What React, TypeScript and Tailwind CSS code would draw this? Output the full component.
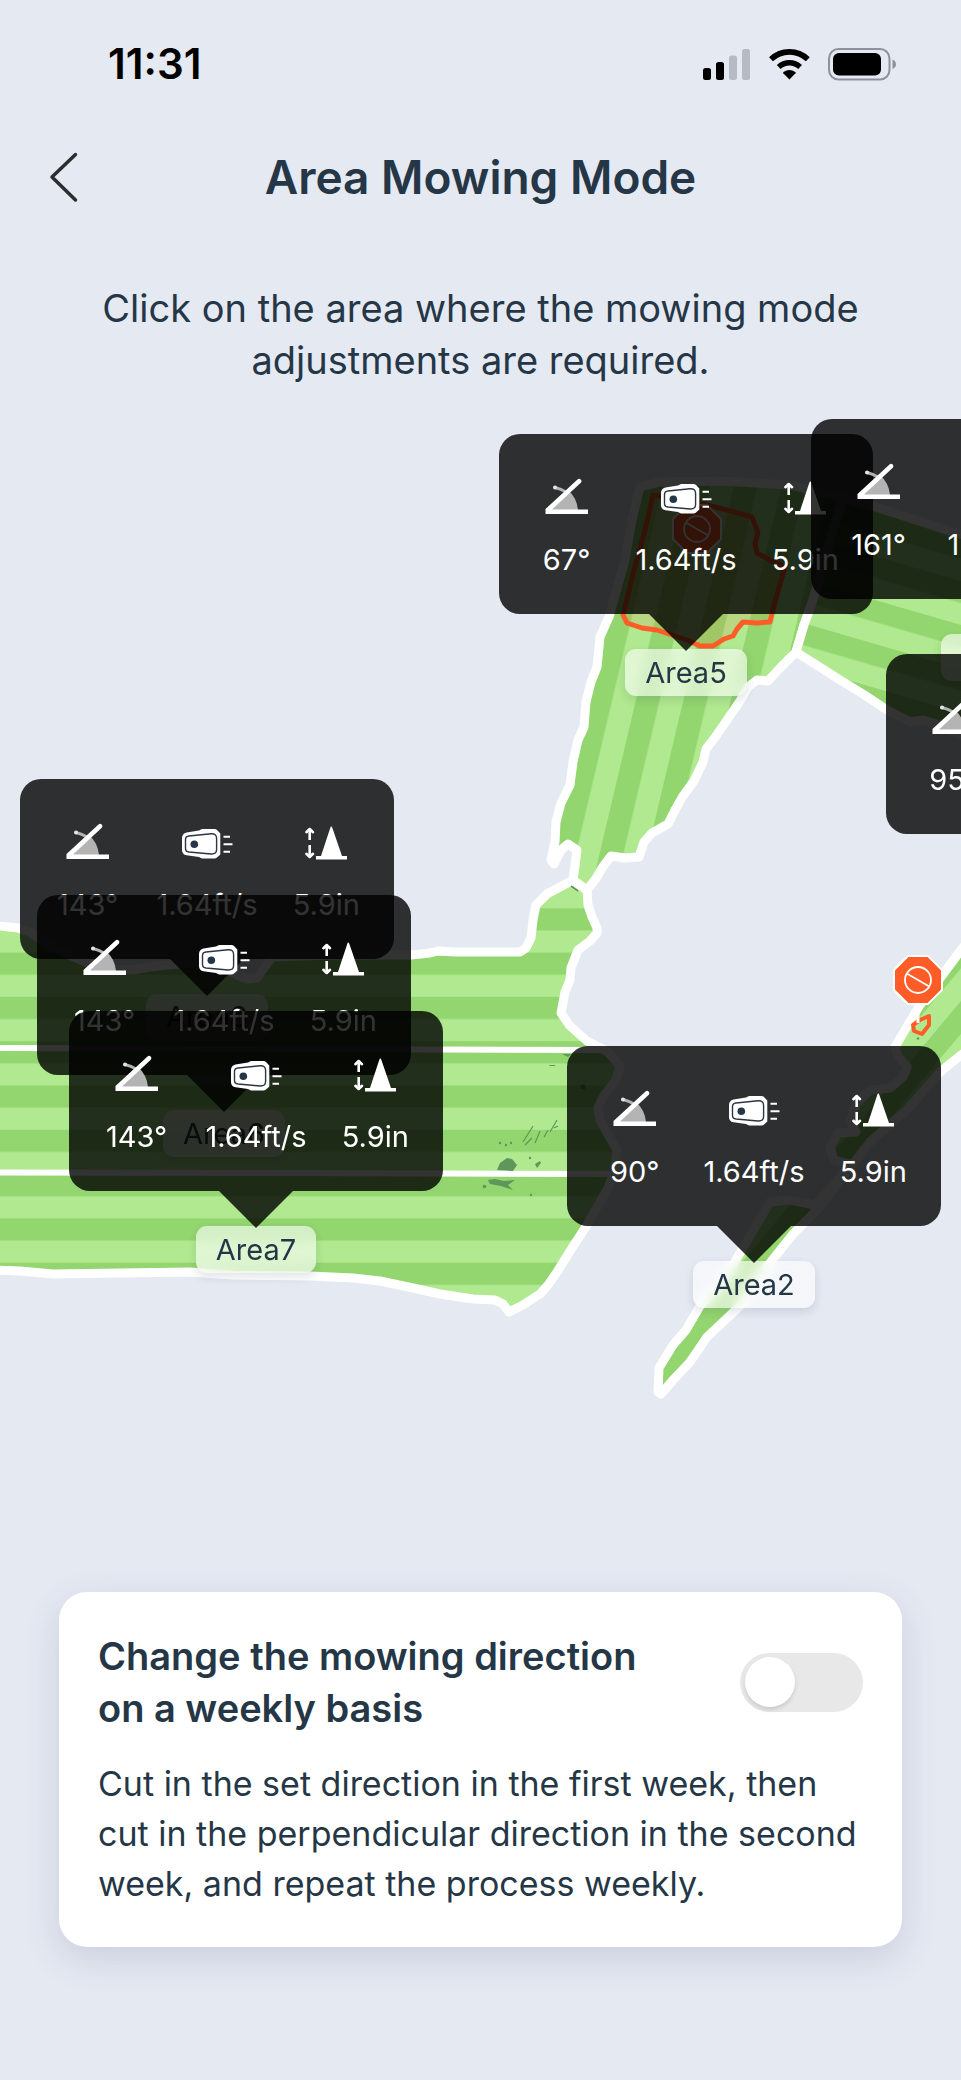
import { useState } from "react";

const MAP = { top: 386, width: 961, height: 1206 };

type Area = { name: string; angle: string; speed: string; height: string; x: number; y: number };

// x is the centre of a callout and y its top edge, in map units.
const areas: Area[] = [
  { name: "Area5", angle: "67°", speed: "1.64ft/s", height: "5.9in", x: 686, y: 434 },
  { name: "Area1", angle: "161°", speed: "1.64ft/s", height: "5.9in", x: 998, y: 419 },
  { name: "Area3", angle: "95°", speed: "1.64ft/s", height: "5.9in", x: 1073, y: 654 },
  { name: "Area8", angle: "143°", speed: "1.64ft/s", height: "5.9in", x: 207, y: 779 },
  { name: "Area6", angle: "143°", speed: "1.64ft/s", height: "5.9in", x: 224, y: 895 },
  { name: "Area7", angle: "143°", speed: "1.64ft/s", height: "5.9in", x: 256, y: 1011 },
  { name: "Area2", angle: "90°", speed: "1.64ft/s", height: "5.9in", x: 754, y: 1046 },
];

function AngleIcon() {
  return (
    <svg viewBox="0 0 60 60" className="size-[60px]" aria-hidden="true">
      <path d="M10 46 L31 26 Q40 34 41 46 Z" fill="#b4b4b4" />
      <path d="M18 23.5 Q24 25 29 28" fill="none" stroke="#b4b4b4" strokeWidth="3" strokeLinecap="round" />
      <circle cx="18" cy="23.5" r="2" fill="#e5e5e5" />
      <path d="M8.5 45 L40.5 15.5 A2.3 2.3 0 0 1 43.8 18.7 L15 45.5 H51 V50 H8.5 Z" fill="#fff" />
    </svg>
  );
}

function MowerIcon() {
  return (
    <svg viewBox="0 0 60 60" className="size-[60px]" aria-hidden="true">
      <path
        d="M5 29 Q5 24.5 9.5 23.5 L22 21.5 L25 20 H37.5 Q39 20 40 21 L43.3 24.5 V45.5 L40 48.6 Q39 49.6 37.5 49.6 H25 L22 48 L9.5 46.3 Q5 45.5 5 41 Z"
        fill="#fff"
      />
      <path
        d="M12 27 L34 24.7 Q39.6 24.4 39.6 29.5 V40.5 Q39.6 45.4 34 45 L12 43 Q8.5 42.6 8.5 39.5 V30.5 Q8.5 27.4 12 27 Z"
        fill="none"
        stroke="#2b3644"
        strokeWidth="1.4"
      />
      <circle cx="17.3" cy="35.2" r="3.8" fill="#253746" />
      <path d="M46.5 27.7 H53 M46.5 35.2 H55.5 M46.5 42.7 H53" stroke="#fff" strokeWidth="2" />
    </svg>
  );
}

function ConeIcon() {
  return (
    <svg viewBox="0 0 60 60" className="size-[60px]" aria-hidden="true">
      <path d="M13.7 21 V31 M13.7 36 V47" stroke="#fff" strokeWidth="2.6" />
      <path
        d="M10.4 23.2 L13.7 20 L17 23.2 M10.4 44.8 L13.7 48 L17 44.8"
        fill="none"
        stroke="#fff"
        strokeWidth="2.6"
        strokeLinecap="round"
        strokeLinejoin="round"
      />
      <path d="M35.3 17.5 Q35.9 17.5 36.2 18.5 L46 47 H51 V50.4 H20 V47 H25 L34.4 18.5 Q34.7 17.5 35.3 17.5 Z" fill="#fff" />
    </svg>
  );
}

function AreaPin({ area }: { area: Area }) {
  return (
    <button
      type="button"
      className="absolute flex -translate-x-1/2 flex-col items-center text-[29px] leading-[40px]"
      style={{
        left: `${(area.x / MAP.width) * 100}%`,
        top: `${((area.y - MAP.top) / MAP.height) * 100}%`,
      }}
    >
      <span className="grid w-[374px] grid-cols-3 rounded-[21px] bg-black/80 px-2 pt-[30px] pb-[34px] text-white">
        <span className="flex flex-col items-center gap-4">
          <AngleIcon />
          {area.angle}
        </span>
        <span className="flex flex-col items-center gap-4">
          <MowerIcon />
          {area.speed}
        </span>
        <span className="flex flex-col items-center gap-4">
          <ConeIcon />
          {area.height}
        </span>
      </span>
      <svg viewBox="0 0 74 37" className="z-10 h-[37px] w-[74px]" aria-hidden="true">
        <path d="M0 0 H74 L37 37 Z" fill="#000" fillOpacity="0.8" />
      </svg>
      <span className="-mt-[2px] flex h-[47px] items-center justify-center rounded-[11px] bg-white/60 px-5 text-[#253746] shadow-[0_4px_10px_rgba(40,55,90,0.14)] backdrop-blur-[6px]">
        {area.name}
      </span>
    </button>
  );
}

function StopSign({ x, y }: { x: number; y: number }) {
  return (
    <g transform={`translate(${x} ${y})`}>
      <path d="M-10 -24 H10 L24 -10 V10 L10 24 H-10 L-24 10 V-10 Z" fill="#ff5c28" stroke="#fff" strokeWidth="2" />
      <circle r="13" fill="none" stroke="#fff" strokeWidth="1.8" />
      <path d="M-11.3 -6.5 L11.3 6.5" stroke="#fff" strokeWidth="1.8" />
    </g>
  );
}

function LawnMap() {
  return (
    <svg
      viewBox={`0 ${MAP.top} ${MAP.width} ${MAP.height}`}
      preserveAspectRatio="none"
      className="absolute inset-0 size-full"
      role="img"
      aria-label="Lawn map"
    >
      <defs>
        <pattern id="stripes-main" width="10" height="44.3" patternUnits="userSpaceOnUse" patternTransform="translate(0 908.3)">
          <rect width="10" height="44.3" fill="#b0e98f" />
          <rect width="10" height="22.1" fill="#93d56e" />
        </pattern>
        <pattern id="stripes-north" width="46.2" height="10" patternUnits="userSpaceOnUse" patternTransform="translate(636.7 696.7) rotate(13.3)">
          <rect width="46.2" height="10" fill="#b0e98f" />
          <rect width="23.1" height="10" fill="#93d56e" />
        </pattern>
        <pattern id="stripes-east" width="10" height="42.2" patternUnits="userSpaceOnUse" patternTransform="translate(961 625) rotate(16.2)">
          <rect width="10" height="42.2" fill="#b0e98f" />
          <rect width="10" height="21.1" fill="#93d56e" />
        </pattern>
        <pattern id="stripes-south" width="10" height="42" patternUnits="userSpaceOnUse" patternTransform="translate(961 1001) rotate(-50)">
          <rect width="10" height="42" fill="#b0e98f" />
          <rect width="10" height="21" fill="#93d56e" />
        </pattern>
      </defs>

      <g stroke="#fff" strokeWidth="9" strokeLinejoin="round" strokeLinecap="round">
        <path
          fill="url(#stripes-main)"
          d="M-10 926 L0 926 L18 928 L30 932 L50 946 L87 963 L110 969 L133 970 L150 967 L167 965 L210 962 L237 975 L247 979 L257 978 L272 957 L330 955 L411 955 L430 953 L438 951 L455 952 L480 952 L500 952 L520 952 L526 948 L531 938 L533 920 L536 905 L547 894 L560 887 L573 880 L587 890 L588 905 L592 917 L597 928 L597 933 L590 941 L578 950 L571 968 L570 980 L565 992 L561 1013 L570 1026 L587 1041 L608 1052 L620 1066 L616 1080 L605 1094 L598 1107 L600 1120 L610 1138 L617 1150 L615 1170 L608 1188 L587 1225 L572 1248 L557 1272 L548 1285 L540 1294 L523 1305 L509 1312 L503 1304 L495 1300 L473 1299 L440 1294 L413 1288 L380 1281 L353 1278 L310 1276 L233 1275 L190 1272 L120 1273 L53 1274 L20 1271 L-10 1270 Z"
        />
        <path
          fill="url(#stripes-north)"
          d="M640 487 L660 482 L720 481 L790 485 L843 498 L834 528 L813 600 L804 625 L796 652 L780 668 L768 681 L757 680 L748 687 L740 701 L727 720 L716 736 L706 749 L703 762 L694 781 L683 796 L675 810 L668 824 L652 833 L644 842 L639 857 L625 858 L611 856 L602 868 L597 877 L587 890 L573 880 L575 866 L577 850 L568 844 L561 850 L554 864 L551 860 L555 842 L556 822 L561 803 L570 785 L573 762 L578 740 L584 727 L586 702 L591 682 L597 667 L600 637 L609 617 L625 560 L632 520 Z"
        />
        <path
          fill="url(#stripes-east)"
          d="M843 498 L873 506 L910 518 L940 528 L980 540 V742 L961 735 L933 723 L923 720 L910 722 L887 710 L863 694 L840 680 L815 664 L796 652 L804 625 L813 600 L834 528 Z"
        />
        <path
          fill="url(#stripes-south)"
          d="M975 932 L961 950 L938 981 L920 1005 L905 1030 L895 1047 L898 1056 L907 1067 L903 1077 L890 1088 L870 1090 L856 1104 L850 1122 L856 1132 L838 1133 L830 1147 L834 1160 L850 1164 L838 1180 L815 1205 L790 1200 L770 1202 L740 1253 L726 1277 L700 1306 L686 1330 L673 1345 L659 1368 L658 1392 L661 1394 L673 1380 L690 1362 L707 1337 L740 1306 L762 1273 L793 1234 L817 1210 L843 1177 L870 1142 L907 1110 L940 1072 L961 1055 L975 1045 Z"
        />
      </g>
      <path d="M0 1048 L300 1049 L600 1050 M0 1172.5 L300 1173 L614 1174" stroke="#fff" strokeWidth="6" />

      <g fill="#5f965a">
        <path d="M497 1170 L500 1163 L507 1158 L512 1159 L517 1165 L513 1171 Z" />
        <path d="M488 1180 L495 1179 L504 1181 L515 1180 L508 1185 L513 1190 L501 1186 L490 1184 Z" />
        <path d="M535 1164 L540 1161 L541 1163 L537 1168 Z" />
        <circle cx="484.5" cy="1186.5" r="1.8" />
        <circle cx="500" cy="1143" r="1.2" />
        <circle cx="506" cy="1145" r="1.2" />
        <circle cx="511" cy="1143" r="1.2" />
        <circle cx="530" cy="1158" r="1.2" />
        <circle cx="531" cy="1195" r="1.2" />
        <circle cx="583" cy="1087" r="2.5" />
        <path d="M562 1054 H571 L568 1057 Z M549 1065 H555 V1066 H550 Z" />
      </g>
      <path
        d="M533 1126 L523 1142 M532 1138 L525 1145 M540 1131 L535 1143 M548 1130 L544 1137 M557 1120 L550 1132 M558 1126 L554 1128"
        stroke="#5f965a"
        strokeWidth="1.2"
      />
      <path d="M571 886 L578 891" stroke="#5f7a62" strokeWidth="1.5" />

      <path
        d="M653 495 L645 530 L634 570 L623 615 L627 623 L642 628 L657 630 L672 635 L687 640 L700 646 L713 646 L724 639 L733 636 L737 629 L743 622 L757 623 L770 622 L774 605 L785 567 L772 561 L757 553 L755 543 L758 533 L752 517 L727 510 L707 505 L667 497 Z"
        fill="#ff5c28"
        fillOpacity="0.12"
        stroke="#ff5c28"
        strokeWidth="5"
        strokeLinejoin="round"
      />
      <path d="M913 1025 L920 1020 L929 1016 L929 1025 L922 1034 L914 1031 Z" fill="#b0e98f" stroke="#ff5c28" strokeWidth="4" strokeLinejoin="round" />
      <path d="M918 1005 V1023" stroke="#fff" strokeWidth="3" />
      <circle cx="918" cy="1038.5" r="1.2" fill="#5f965a" />
      <StopSign x={697} y={529} />
      <StopSign x={918} y={980} />
    </svg>
  );
}

function StatusIcons() {
  return (
    <svg viewBox="702 46 196 34" className="h-[34px] w-[196px]" role="img" aria-label="Signal, Wi-Fi and battery">
      <rect x="703" y="67" width="8" height="12" rx="2.5" />
      <rect x="716" y="61" width="8" height="18" rx="2.5" />
      <rect x="729" y="54.5" width="8" height="24.5" rx="2.5" fill="#b7bac2" />
      <rect x="742" y="48" width="8" height="31" rx="2.5" fill="#b7bac2" />
      <path d="M789.4 78.5 L783.3 72.3 Q782.8 71.6 783.5 71 Q789.4 67 795.3 71 Q796 71.6 795.5 72.3 Z" />
      <path d="M778.7 66 A15.5 15.5 0 0 1 800.1 66" fill="none" stroke="#000" strokeWidth="5.4" />
      <path d="M771 58.3 A26.5 26.5 0 0 1 807.8 58.3" fill="none" stroke="#000" strokeWidth="5.6" />
      <rect x="829" y="48" width="60.5" height="30.5" rx="9.5" fill="none" stroke="#8f9299" strokeWidth="2" />
      <rect x="833" y="52" width="48" height="22.5" rx="6" />
      <path d="M892.5 58.5 Q896 60 896 63.3 Q896 66.5 892.5 68 Z" fill="#8f9299" />
    </svg>
  );
}

export default function App() {
  const [weekly, setWeekly] = useState(false);
  return (
    <div className="flex min-h-screen flex-col overflow-hidden bg-[#e5e9f2] font-[Inter,'Liberation_Sans',sans-serif] text-[#253746]">
      <div className="flex h-32 items-center justify-between pr-[63px] pl-[108px]">
        <span className="text-[42px] leading-none font-semibold text-black">11:31</span>
        <StatusIcons />
      </div>

      <header className="relative flex h-[98px] items-center justify-center">
        <button type="button" aria-label="Back" className="absolute left-[44px]">
          <svg viewBox="0 0 40 56" className="h-14 w-10" fill="none" stroke="#2d2d2f" strokeWidth="3.5" strokeLinecap="round" strokeLinejoin="round">
            <path d="M31.5 5.5 L8 28 L31.5 51" />
          </svg>
        </button>
        <h1 className="text-[46px] leading-[60px] font-semibold">Area Mowing Mode</h1>
      </header>

      <p className="px-20 pt-14 text-center text-[38px] leading-[52px]">
        Click on the area where the mowing mode adjustments are required.
      </p>

      <main className="relative min-h-[1206px] flex-1">
        <LawnMap />
        {areas.map((area) => (
          <AreaPin key={area.name} area={area} />
        ))}
      </main>

      <section className="mx-[59px] mb-[133px] flex flex-col gap-[25px] rounded-[28px] bg-white px-[39px] py-[38px] shadow-[0_12px_36px_rgba(60,75,110,0.16)]">
        <div className="flex items-center justify-between gap-6">
          <label htmlFor="weekly" className="max-w-[580px] text-[38px] leading-[52px] font-semibold">
            Change the mowing direction on a weekly basis
          </label>
          <input
            id="weekly"
            type="checkbox"
            role="switch"
            checked={weekly}
            onChange={(event) => setWeekly(event.target.checked)}
            className="flex h-[59px] w-[123px] shrink-0 appearance-none items-center rounded-full bg-[#e8e8e8] px-[5px] before:size-[50px] before:rounded-full before:bg-white before:shadow-[0_3px_4px_rgba(0,0,0,0.12)] checked:justify-end checked:bg-[#93d56e]"
          />
        </div>
        <p className="text-[34px] leading-[50px]">
          Cut in the set direction in the first week, then cut in the perpendicular direction in the second week, and repeat the process weekly.
        </p>
      </section>
    </div>
  );
}
